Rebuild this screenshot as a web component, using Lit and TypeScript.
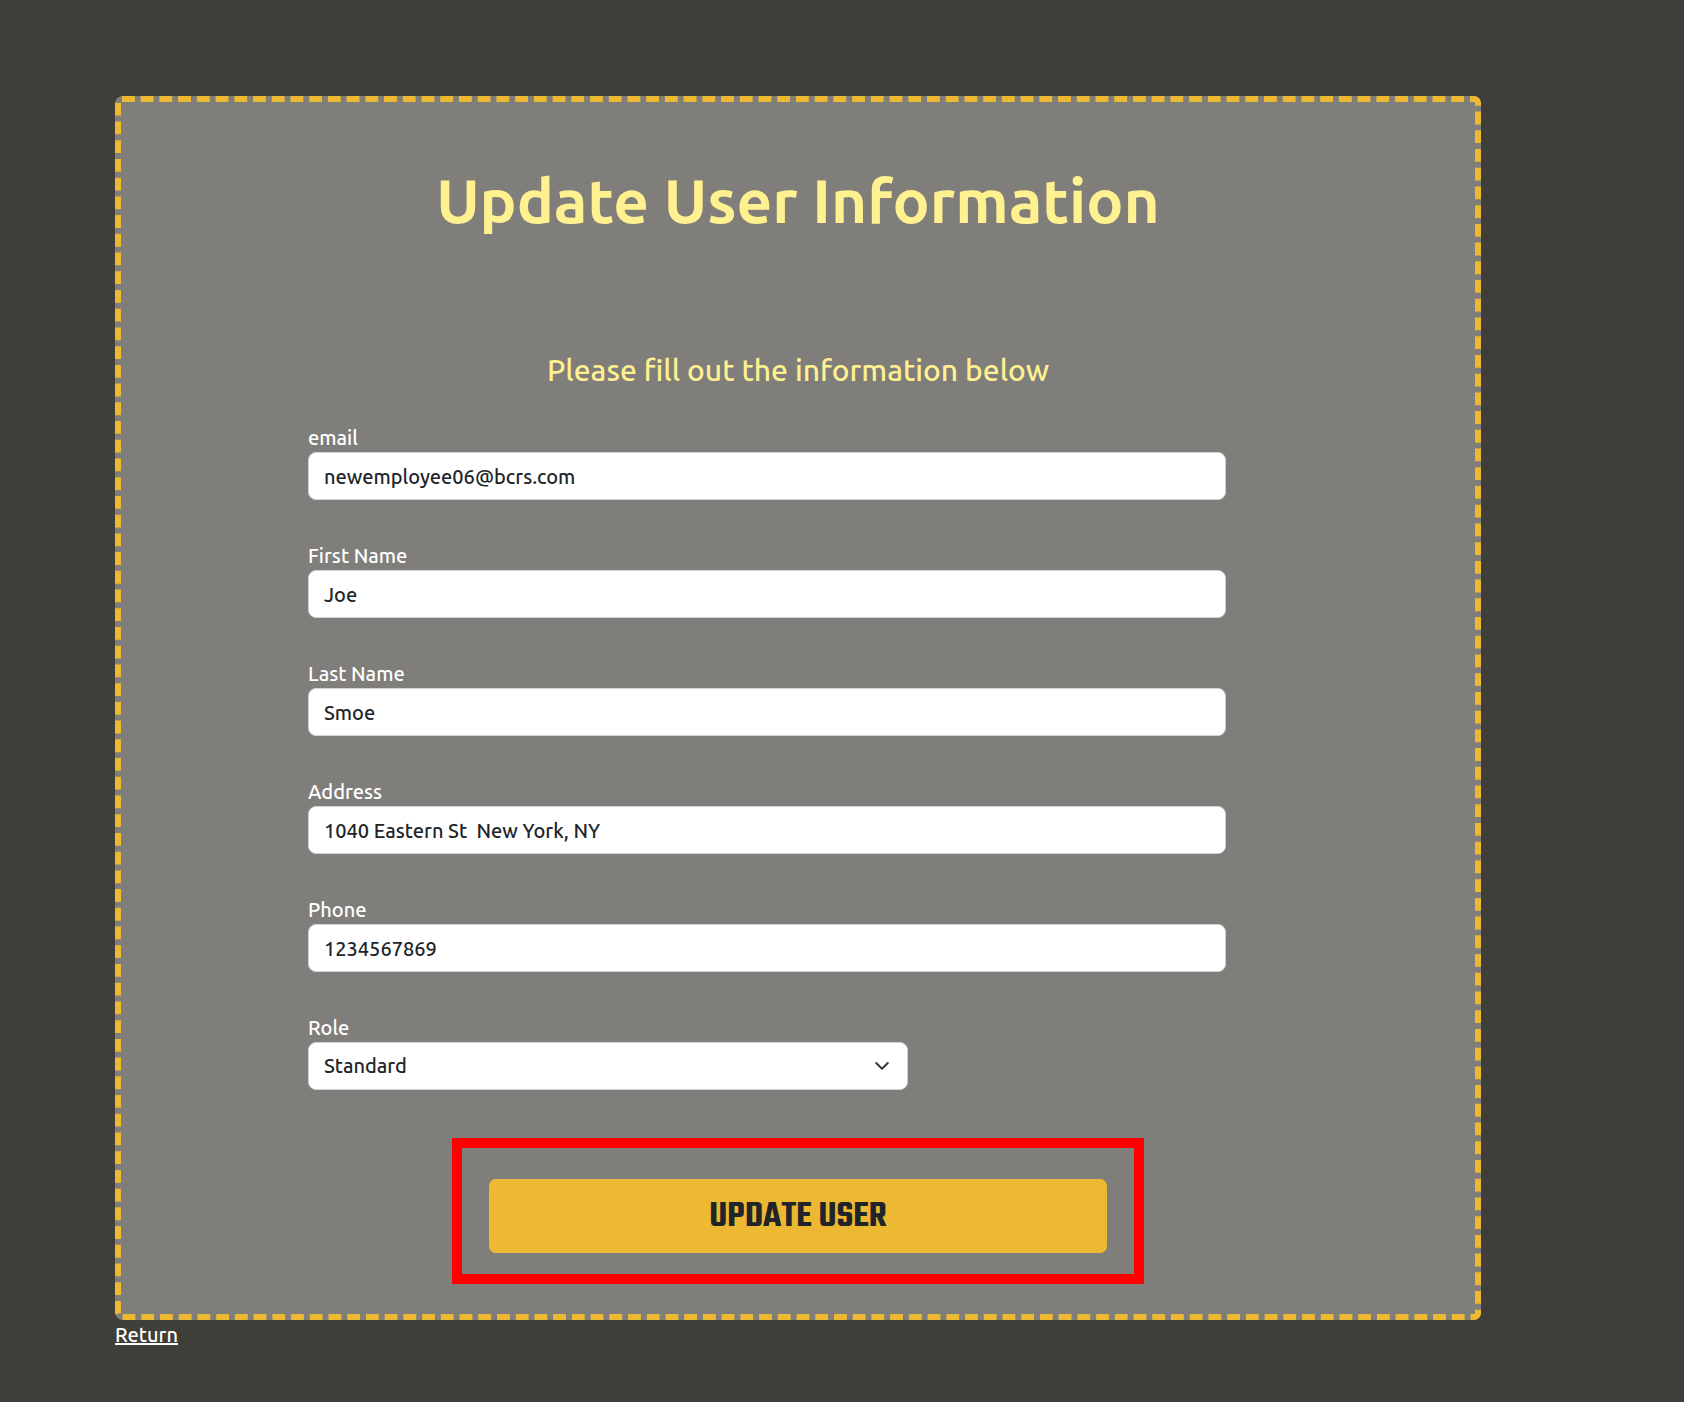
import { LitElement, html, css, svg } from 'lit';
import { customElement, property, state } from 'lit/decorators.js';

interface Field {
  id: string;
  label: string;
  type: string;
  value: string;
}

const FIELDS: Field[] = [
  { id: 'email', label: 'email', type: 'text', value: 'newemployee06@bcrs.com' },
  { id: 'firstName', label: 'First Name', type: 'text', value: 'Joe' },
  { id: 'lastName', label: 'Last Name', type: 'text', value: 'Smoe' },
  { id: 'address', label: 'Address', type: 'text', value: '1040 Eastern St  New York, NY' },
  { id: 'phone', label: 'Phone', type: 'tel', value: '1234567869' },
];

const ROLES = ['Standard', 'Admin'];

@customElement('text-field')
export class TextField extends LitElement {
  @property() name = '';
  @property() label = '';
  @property() type = 'text';
  @property() value = '';

  static styles = css`
    :host {
      display: block;
    }
    .label {
      display: block;
      line-height: 28px;
      color: #fff;
    }
    .input {
      display: block;
      box-sizing: border-box;
      width: 100%;
      height: 48px;
      margin: 0;
      padding: 0 15px;
      border: 1px solid #ced4da;
      border-radius: 8px;
      background: #fff;
      color: #212529;
      font: inherit;
    }
  `;

  render() {
    return html`
      <label class="label" for=${this.name}>${this.label}</label>
      <input class="input" id=${this.name} name=${this.name} type=${this.type} .value=${this.value} />
    `;
  }
}

@customElement('role-select')
export class RoleSelect extends LitElement {
  @state() private role = ROLES[0];

  static styles = css`
    :host {
      display: block;
    }
    .label {
      display: block;
      line-height: 28px;
      color: #fff;
    }
    .control {
      display: grid;
      align-items: center;
      max-width: 600px;
    }
    .select,
    .chevron {
      grid-area: 1 / 1;
    }
    .select {
      appearance: none;
      box-sizing: border-box;
      width: 100%;
      height: 48px;
      margin: 0;
      padding: 0 45px 0 15px;
      border: 1px solid #ced4da;
      border-radius: 8px;
      background: #fff;
      color: #212529;
      font: inherit;
    }
    .chevron {
      justify-self: end;
      width: 16px;
      height: 16px;
      margin-right: 18px;
      pointer-events: none;
      fill: none;
      stroke: #343a40;
      stroke-width: 2;
      stroke-linecap: round;
      stroke-linejoin: round;
    }
  `;

  private pick(e: Event) {
    this.role = (e.target as HTMLSelectElement).value;
  }

  render() {
    return html`
      <label class="label" for="role">Role</label>
      <div class="control">
        <select class="select" id="role" name="role" @change=${this.pick}>
          ${ROLES.map((r) => html`<option value=${r} ?selected=${r === this.role}>${r}</option>`)}
        </select>
        <svg class="chevron" viewBox="0 0 16 16" aria-hidden="true">
          ${svg`<path d="m2.2 5 5.8 5.8L13.800 5" />`}
        </svg>
      </div>
    `;
  }
}

@customElement('app-root')
export class AppRoot extends LitElement {
  static styles = css`
    :host {
      display: block;
      box-sizing: border-box;
      min-height: 100vh;
      padding: 96px 203px 48px 115px;
      background: #403e39;
      font-family: Ubuntu, 'Open Sans', sans-serif;
      font-size: 20px;
      font-weight: 500;
      line-height: 30px;
    }
    .card {
      position: relative;
      display: flex;
      flex-direction: column;
      align-items: center;
      padding: 66px 6px 36px;
      border-radius: 8px;
      background: #807e7b;
    }
    .outline {
      position: absolute;
      inset: 0;
      width: 100%;
      height: 100%;
      pointer-events: none;
    }
    .dashes {
      x: 3px;
      y: 3px;
      width: calc(100% - 6px);
      height: calc(100% - 6px);
      rx: 4px;
      fill: none;
      stroke: #edb933;
      stroke-width: 6px;
      stroke-dasharray: 13 6;
    }
    .title {
      margin: 0 0 114px;
      color: #fff090;
      font-size: 62px;
      font-weight: 700;
      line-height: 76px;
    }
    .intro {
      margin: 0 0 36px;
      color: #fff090;
      font-size: 30px;
      line-height: 36px;
    }
    .form {
      display: flex;
      flex-direction: column;
      align-items: center;
      align-self: stretch;
      gap: 48px;
      padding: 0 187px;
    }
    .fields {
      display: flex;
      flex-direction: column;
      align-self: stretch;
      gap: 42px;
      padding-right: 62px;
    }
    .highlight {
      display: flex;
      box-sizing: border-box;
      width: 100%;
      max-width: 692px;
      padding: 31px 27px 21px;
      border: 10px solid #f00;
    }
    .submit {
      flex: 1;
      height: 74px;
      padding: 2px 0 0;
      border: 0;
      border-radius: 7px;
      background: #edb933;
      color: #212529;
      font-family: Teko, 'Roboto Condensed', sans-serif;
      font-size: 38px;
      font-weight: 600;
      text-transform: uppercase;
      cursor: pointer;
    }
    .return {
      color: #fff;
    }
  `;

  private submit(e: Event) {
    e.preventDefault();
  }

  render() {
    return html`
      <main class="card">
        <svg class="outline" aria-hidden="true"><rect class="dashes" pathLength="5225" /></svg>
        <h1 class="title">Update User Information</h1>
        <p class="intro">Please fill out the information below</p>
        <form class="form" @submit=${this.submit}>
          <div class="fields">
            ${FIELDS.map(
              (f) => html`<text-field name=${f.id} label=${f.label} type=${f.type} value=${f.value}></text-field>`
            )}
            <role-select></role-select>
          </div>
          <div class="highlight">
            <button class="submit" type="submit">Update User</button>
          </div>
        </form>
      </main>
      <a class="return" href="#users">Return</a>
    `;
  }
}
